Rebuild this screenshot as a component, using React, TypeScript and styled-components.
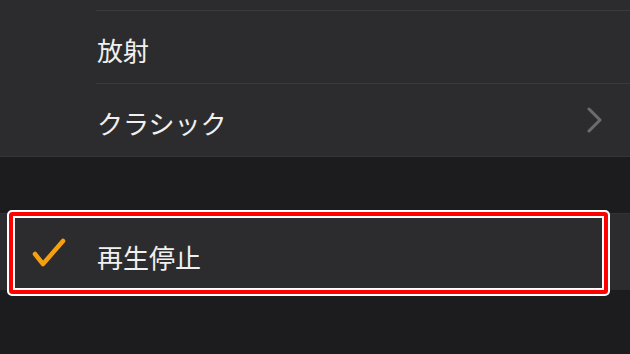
import React from "react";
import styled, { createGlobalStyle } from "styled-components";

const Global = createGlobalStyle`
  html, body { margin: 0; padding: 0; background: #1c1c1e; }
  body { width: 630px; height: 354px; overflow: hidden; font-family: "Noto Sans CJK JP", "Noto Sans", sans-serif; }
`;

const Page = styled.div`
  width: 630px;
  height: 354px;
  background: #1c1c1e;
  display: flex;
  flex-direction: column;
`;

const Group = styled.div`
  background: #2c2c2e;
  display: flex;
  flex-direction: column;
  border-bottom: 1px solid #353537;
`;

const Sliver = styled.div`
  height: 10px;
`;

const Row = styled.div<{ $h?: number }>`
  position: relative;
  height: ${(p) => p.$h ?? 73}px;
  display: flex;
  align-items: center;
  border-top: 1px solid #3a3a3c;
  margin-left: 96px;
  padding-right: 28px;
  box-sizing: border-box;
`;

const Label = styled.span`
  flex: 1;
  color: #f0f0f0;
  font-size: 26px;
  line-height: 26px;
  padding-left: 1px;
  padding-top: 5px;
  letter-spacing: 0;
`;

const Gap = styled.div`
  height: 56px;
`;

const SoloGroup = styled.div`
  background: #2c2c2e;
  height: 76px;
  position: relative;
  display: flex;
  align-items: center;
  border-top: 1px solid #323234;
`;

const CheckSlot = styled.div`
  width: 97px;
  height: 76px;
  display: flex;
  align-items: center;
  position: relative;
`;

const SoloLabel = styled(Label)`
  padding-top: 10px;
  padding-left: 0;
`;

const Highlight = styled.div`
  position: absolute;
  left: 7px;
  top: -4px;
  width: 603px;
  height: 86px;
  box-sizing: border-box;
  border: 2px solid #ffffff;
  border-radius: 5px;
  box-shadow: inset 0 0 0 4px #ff0000, inset 0 0 0 6px #ffffff;
  pointer-events: none;
`;

const Chevron = () => (
  <svg width="16" height="26" viewBox="0 0 16 26" style={{ marginRight: 0 }}>
    <polyline
      points="3,2 14,13 3,24"
      fill="none"
      stroke="#6c6c70"
      strokeWidth="3"
      strokeLinecap="round"
      strokeLinejoin="round"
    />
  </svg>
);

const Check = () => (
  <svg
    width="40"
    height="36"
    viewBox="0 0 40 36"
    style={{ position: "absolute", left: 30, top: 24 }}
  >
    <polyline
      points="5,16 13,26 33,3"
      fill="none"
      stroke="#f7a00f"
      strokeWidth="4.5"
      strokeLinecap="round"
      strokeLinejoin="round"
    />
  </svg>
);

export default function App() {
  return (
    <Page>
      <Global />
      <Group>
        <Sliver />
        <Row>
          <Label>放射</Label>
        </Row>
        <Row>
          <Label>クラシック</Label>
          <Chevron />
        </Row>
      </Group>
      <Gap />
      <SoloGroup>
        <CheckSlot>
          <Check />
        </CheckSlot>
        <SoloLabel>再生停止</SoloLabel>
        <Highlight />
      </SoloGroup>
    </Page>
  );
}
